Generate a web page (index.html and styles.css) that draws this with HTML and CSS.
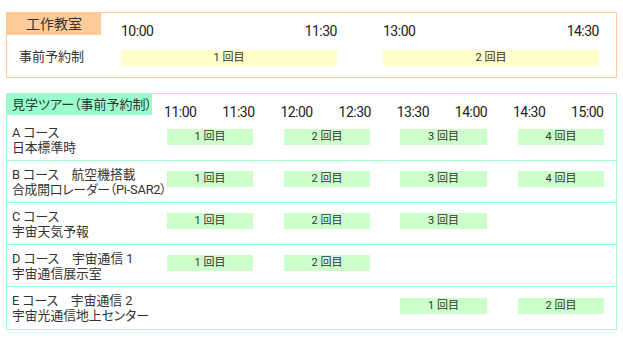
FILE: index.html
```
<!DOCTYPE html>
<html lang="ja">
<head>
<meta charset="utf-8">
<title>スケジュール</title>
<link rel="stylesheet" href="styles.css">
</head>
<body>
<section class="box workshop">
  <div class="w-head">
    <div class="w-label">工作教室</div>
    <div class="w-times c1"><span>10:00</span><span>11:30</span></div>
    <div class="w-times c2"><span>13:00</span><span>14:30</span></div>
  </div>
  <div class="w-row">
    <div class="w-name">事前予約制</div>
    <div class="w-bar c1">1 回目</div>
    <div class="w-bar c2">2 回目</div>
  </div>
</section>

<section class="box tour">
  <div class="t-head">
    <div class="t-label">見学ツアー（事前予約制）</div>
    <div class="t-times">
      <span>11:00</span><span>11:30</span><span>12:00</span><span>12:30</span>
      <span>13:30</span><span>14:00</span><span>14:30</span><span>15:00</span>
    </div>
  </div>
  <div class="t-row first">
    <div class="t-name">A コース<br>日本標準時</div>
    <div class="t-bar s1">1 回目</div>
    <div class="t-bar s2">2 回目</div>
    <div class="t-bar s3">3 回目</div>
    <div class="t-bar s4">4 回目</div>
  </div>
  <div class="t-row">
    <div class="t-name">B コース　航空機搭載<br><span class="tight">合成開口レーダー（Pi-SAR2）</span></div>
    <div class="t-bar s1">1 回目</div>
    <div class="t-bar s2">2 回目</div>
    <div class="t-bar s3">3 回目</div>
    <div class="t-bar s4">4 回目</div>
  </div>
  <div class="t-row">
    <div class="t-name">C コース<br>宇宙天気予報</div>
    <div class="t-bar s1">1 回目</div>
    <div class="t-bar s2">2 回目</div>
    <div class="t-bar s3">3 回目</div>
  </div>
  <div class="t-row">
    <div class="t-name">D コース　宇宙通信 1<br>宇宙通信展示室</div>
    <div class="t-bar s1">1 回目</div>
    <div class="t-bar s2">2 回目</div>
  </div>
  <div class="t-row last">
    <div class="t-name">E コース　宇宙通信 2<br>宇宙光通信地上センター</div>
    <div class="t-bar s3">1 回目</div>
    <div class="t-bar s4">2 回目</div>
  </div>
</section>
</body>
</html>
```
FILE: styles.css
```
* { box-sizing: border-box; }

body {
  margin: 12px 0 0 6px;
  font-family: Roboto, "Noto Sans CJK JP", sans-serif;
  font-feature-settings: "palt";
  color: #333;
  background: #fff;
}

.box {
  width: 611px;
  border: 1px solid;
}

/* ---------- workshop ---------- */
.workshop {
  border-color: #ffcc99;
  height: 66px;
}

.w-head,
.w-row {
  display: grid;
  grid-template-columns: 114px 216px 46px 216px;
}

.w-head {
  grid-template-rows: 22px;
}

.w-label {
  width: 94px;
  background: #ffcc99;
  font-size: 14px;
  line-height: 22px;
  text-align: center;
  color: #333;
}

.c1 { grid-column: 2; }
.c2 { grid-column: 4; }

.w-times {
  display: flex;
  justify-content: space-between;
  font-size: 14px;
  line-height: 14px;
  letter-spacing: -0.5px;
  color: #222;
  padding-top: 11px;
  white-space: nowrap;
}

.w-row {
  align-items: center;
  padding-top: 15px;
}

.w-name {
  padding-left: 12px;
  font-size: 13px;
  line-height: 15px;
  margin-top: -3px;
}

.w-bar {
  background: #ffffcc;
  height: 16px;
  font-size: 11px;
  line-height: 16px;
  text-align: center;
}

/* ---------- tour ---------- */
.tour {
  margin-top: 15px;
  border-color: #99ffcc;
}

.t-head {
  display: flex;
  height: 21px;
}

.t-label {
  width: 146px;
  background: #99ffcc;
  font-size: 13px;
  line-height: 21px;
  padding-left: 5px;
  white-space: nowrap;
}

.t-times {
  display: grid;
  grid-template-columns: repeat(8, 58.15px);
  margin-left: 12px;
  font-size: 14px;
  line-height: 14px;
  letter-spacing: -0.5px;
  color: #222;
  padding-top: 11px;
  white-space: nowrap;
}

.t-row {
  display: grid;
  grid-template-columns: 160px 86px 31px 86px 30px 87px 31px 86px;
  height: 42px;
  align-items: center;
  border-bottom: 1px solid #99ffcc;
}

.t-row.first {
  height: 46px;
  padding-top: 4px;
}

.t-row.last {
  border-bottom: none;
}

.t-name {
  grid-column: 1;
  grid-row: 1;
  padding-left: 5px;
  font-size: 12.8px;
  line-height: 15px;
  white-space: nowrap;
}

.tight {
  letter-spacing: -0.2px;
}

.t-bar {
  grid-row: 1;
  background: #ccffcc;
  height: 16px;
  font-size: 11px;
  line-height: 16px;
  text-align: center;
  margin-bottom: 5px;
}

.s1 { grid-column: 2; }
.s2 { grid-column: 4; }
.s3 { grid-column: 6; }
.s4 { grid-column: 8; }
```
